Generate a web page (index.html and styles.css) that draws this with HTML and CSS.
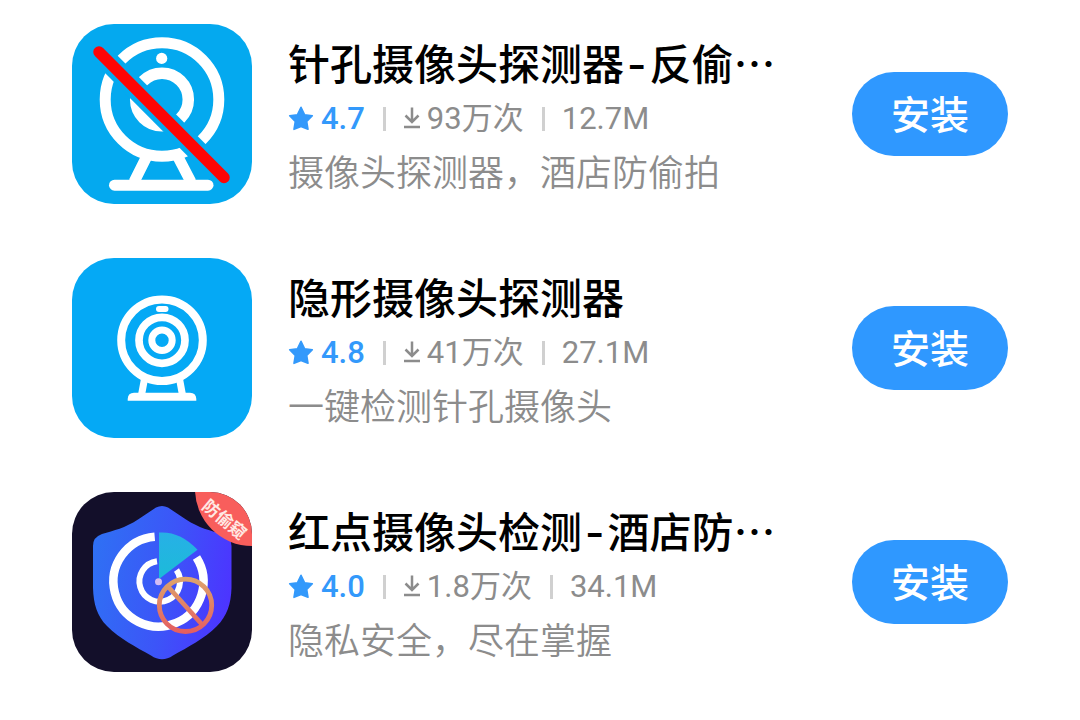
FILE: index.html
```html
<!DOCTYPE html>
<html lang="zh-CN">
<head>
<meta charset="utf-8">
<meta name="viewport" content="width=device-width, initial-scale=1">
<title>应用列表</title>
<link rel="stylesheet" href="styles.css">
</head>
<body>
<svg class="defs" aria-hidden="true">
  <symbol id="star" viewBox="0 0 26 26"><path d="M13 1.300 16.500 8.700 24.300 9.800 18.700 15.500 20 23.300 13 20.400 6 23.300 7.300 15.500 1.700 9.800 9.500 8.700Z" fill="currentColor" stroke="currentColor" stroke-width="1.600" stroke-linejoin="round"/></symbol>
  <symbol id="download" viewBox="0 0 18 24"><path d="M9 0.500V14.500M2.500 8.500 9 15 15.500 8.500M1 20H17" fill="none" stroke="currentColor" stroke-width="2.500"/></symbol>
</svg>
<main class="list">
  <article class="app">
    <svg class="icon" viewBox="0 0 180 180" aria-hidden="true">
      <rect width="180" height="180" fill="#04a9ef"/>
      <g fill="none" stroke="#fff">
        <circle cx="90" cy="75.500" r="56.800" stroke-width="11"/>
        <circle cx="90" cy="75.500" r="26.300" stroke-width="11.500"/>
        <path d="M74.500 133 62 158M106 133 119 158" stroke-width="11"/>
        <path d="M42.500 161.200H136" stroke-width="11" stroke-linecap="round"/>
      </g>
      <circle cx="89.700" cy="34.400" r="5.600" fill="#fff"/>
      <path d="M27 28 138 139.500" stroke="#04a9ef" stroke-width="21"/>
      <path d="M27 28 152 153.500" stroke="#fe0505" stroke-width="11.500" stroke-linecap="round"/>
    </svg>
    <div class="info">
      <h2 class="title">针孔摄像头探测器<span class="dash">-</span>反偷…</h2>
      <p class="meta">
        <span class="score"><svg class="star"><use href="#star"/></svg>4.7</span>
        <span class="item"><svg class="download"><use href="#download"/></svg>93万次</span>
        <span class="item">12.7M</span>
      </p>
      <p class="desc">摄像头探测器，酒店防偷拍</p>
    </div>
    <button class="install" type="button">安装</button>
  </article>

  <article class="app">
    <svg class="icon" viewBox="0 0 180 180" aria-hidden="true">
      <rect width="180" height="180" fill="#05a9f5"/>
      <g fill="none" stroke="#fff">
        <circle cx="90" cy="82.300" r="40.800" stroke-width="8"/>
        <circle cx="90" cy="82.300" r="23" stroke-width="7.700"/>
        <circle cx="90" cy="82.300" r="10.200" stroke-width="7"/>
        <path d="M72.300 122 69.500 137M107.700 122 110.500 137" stroke-width="7"/>
      </g>
      <rect x="84" y="48" width="12.500" height="6" rx="3" fill="#fff"/>
      <path d="M55.700 142.700V141Q56 134.700 62 134.700H118Q124 134.700 124.300 141V142.700Z" fill="#fff"/>
    </svg>
    <div class="info">
      <h2 class="title">隐形摄像头探测器</h2>
      <p class="meta">
        <span class="score"><svg class="star"><use href="#star"/></svg>4.8</span>
        <span class="item"><svg class="download"><use href="#download"/></svg>41万次</span>
        <span class="item">27.1M</span>
      </p>
      <p class="desc">一键检测针孔摄像头</p>
    </div>
    <button class="install" type="button">安装</button>
  </article>

  <article class="app">
    <svg class="icon" viewBox="0 0 180 180" aria-hidden="true">
      <defs>
        <linearGradient id="shield" x1="0" y1="0.300" x2="1" y2="0.500">
          <stop offset="0" stop-color="#2f70f4"/><stop offset="0.550" stop-color="#3c55f8"/><stop offset="1" stop-color="#4c35ff"/>
        </linearGradient>
        <linearGradient id="ban" gradientUnits="userSpaceOnUse" x1="0" y1="86" x2="0" y2="141">
          <stop offset="0" stop-color="#dda46c"/><stop offset="1" stop-color="#e55d60"/>
        </linearGradient>
        <linearGradient id="sweep" x1="0" y1="0" x2="0" y2="1">
          <stop offset="0" stop-color="#27b0e6"/><stop offset="1" stop-color="#1cbbd9"/>
        </linearGradient>
      </defs>
      <rect width="180" height="180" fill="#130f2a"/>
      <path d="M84 15.500Q90 12.500 96 15.500L114 27.500C127 36 138 38.500 150 42Q159.300 45 159.500 54V96C159 112 155 124 145 134C132 147 116 155 101 163.500Q90 171 79 163.500C64 155 48 147 35 134C25 124 21.500 112 21 96V54Q21 45 30 42C42 38.500 53 36 66 27.500Z" fill="url(#shield)"/>
      <g fill="none" stroke="#fff">
        <path d="M82.700 44.700A45 45 0 1 0 124.500 65.500" stroke-width="8.500"/>
        <path d="M85 69.300A20.300 20.300 0 1 0 104.500 78" stroke-width="6"/>
      </g>
      <path d="M87 40.500Q108 39 125.500 57.700L87 87Z" fill="url(#sweep)"/>
      <circle cx="86.500" cy="89.700" r="3.500" fill="#d3bdf4"/>
      <g fill="none" stroke="url(#ban)" stroke-width="4.800">
        <circle cx="113.500" cy="113.300" r="26.200"/>
        <path d="M95.500 94 130 132.500"/>
      </g>
      <circle cx="180" cy="-3" r="57" fill="#f85e5c"/>
      <text class="ribbon" transform="translate(152.500 27.500) rotate(40)" x="0" y="6" text-anchor="middle">防偷窥</text>
    </svg>
    <div class="info">
      <h2 class="title">红点摄像头检测<span class="dash">-</span>酒店防…</h2>
      <p class="meta">
        <span class="score"><svg class="star"><use href="#star"/></svg>4.0</span>
        <span class="item"><svg class="download"><use href="#download"/></svg>1.8万次</span>
        <span class="item">34.1M</span>
      </p>
      <p class="desc">隐私安全，尽在掌握</p>
    </div>
    <button class="install" type="button">安装</button>
  </article>
</main>
</body>
</html>
```
FILE: styles.css
```css
* { box-sizing: border-box; }
body {
  margin: 0;
  background: #fff;
  font-family: "Noto Sans CJK SC", sans-serif;
}
.defs { display: none; }
.list {
  display: flex;
  flex-direction: column;
  gap: 54px;
  padding: 24px 72px;
}
.app {
  display: flex;
  align-items: center;
  gap: 36px;
}
.icon {
  flex: none;
  width: 180px;
  height: 180px;
  border-radius: 42px;
}
.ribbon {
  font-size: 17px;
  font-weight: 700;
  fill: #ffe9e4;
}
.info {
  flex: 1;
  min-width: 0;
}
.title, .meta, .desc {
  margin: 0;
  white-space: nowrap;
}
.title {
  margin-bottom: 2px;
  overflow: hidden;
  font-size: 42px;
  font-weight: 500;
  line-height: 62px;
  color: #000;
}
.dash {
  padding: 0 3px;
  font-family: Inter, sans-serif;
  line-height: 1;
}
.meta {
  display: flex;
  align-items: center;
  font-family: Roboto, "Noto Sans CJK SC", sans-serif;
  font-size: 31px;
  line-height: 48px;
  color: #8c8c8c;
}
.score, .item {
  display: flex;
  align-items: center;
}
.score {
  gap: 7px;
  font-weight: 500;
  color: #3399fb;
}
.item::before {
  content: "";
  width: 3px;
  height: 24px;
  margin: 0 17px 0 18px;
  background: #d0d0d0;
}
.star {
  width: 26px;
  height: 26px;
}
.download {
  width: 18px;
  height: 24px;
  margin-right: 6px;
}
.desc {
  font-size: 36px;
  font-weight: 350;
  line-height: 54px;
  color: #8c8c8c;
}
.install {
  flex: none;
  width: 156px;
  height: 84px;
  padding: 0 0 4px;
  border: 0;
  border-radius: 42px;
  background: #2f98ff;
  color: #fff;
  font: 500 39px/80px "Noto Sans CJK SC", sans-serif;
}
```
